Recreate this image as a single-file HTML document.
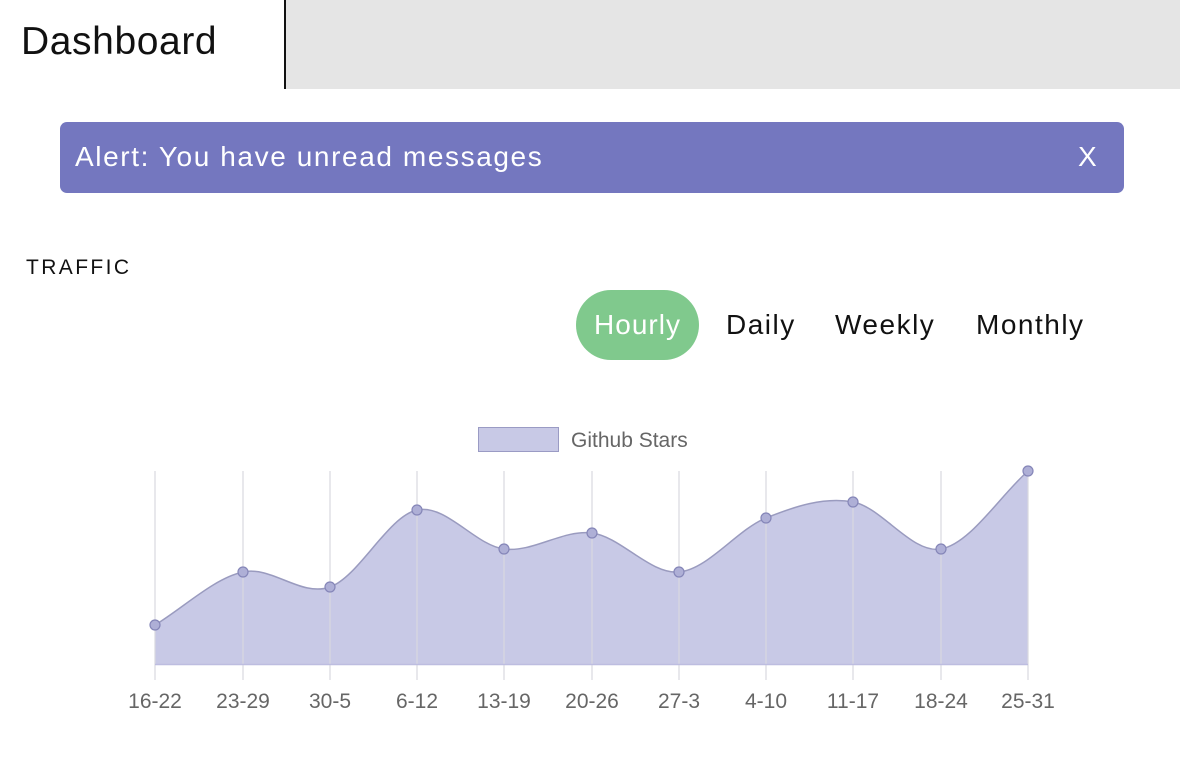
<!DOCTYPE html>
<html><head><style>
body{margin:0;width:1180px;height:784px;background:#fff;font-family:"Liberation Sans",sans-serif;position:relative;overflow:hidden}
.hdr{position:absolute;left:284px;top:0;width:896px;height:89px;background:#e5e5e5;border-left:2px solid #111}
.title{position:absolute;left:21px;top:20px;font-size:39px;color:#111;letter-spacing:0.6px}
.alert{position:absolute;left:60px;top:122px;width:1064px;height:71px;background:#7477bf;border-radius:7px;color:#fff;font-size:28px}
.alert span{position:absolute;left:15px;top:19px;letter-spacing:1.6px}
.alert b{position:absolute;left:1018px;top:19px;font-weight:normal}
.traffic{position:absolute;left:26px;top:256px;font-size:21px;letter-spacing:2.4px;color:#111}
.pill{position:absolute;top:290px;height:70px;line-height:70px;font-size:28px;color:#111;letter-spacing:1.5px}
</style></head><body>
<div class="title">Dashboard</div>
<div class="hdr"></div>
<div class="alert"><span>Alert: You have unread messages</span><b>X</b></div>
<div class="traffic">TRAFFIC</div>
<div class="pill" style="left:576px;width:123px;background:#80c98d;border-radius:35px;color:#fff;text-align:center;letter-spacing:1px">Hourly</div>
<div class="pill" style="left:726px">Daily</div>
<div class="pill" style="left:835px">Weekly</div>
<div class="pill" style="left:976px">Monthly</div>
<svg width="1180" height="784" style="position:absolute;left:0;top:0">
<rect x="478.5" y="427.5" width="80" height="24" fill="#c8c9e6" stroke="#9a9bc4"/>
<text x="571" y="447" font-size="21" fill="#666" font-family="Liberation Sans">Github Stars</text>
<path d="M155 625 C184 607.3 214 578.3 243 572 C272 565.7 301 597.3 330 587 C359 576.7 388 516.3 417 510 C446 503.7 475 545.2 504 549 C533 552.8 563 529.2 592 533 C621 536.8 650 574.5 679 572 C708 569.5 737 529.7 766 518 C795 506.3 824 496.8 853 502 C882 507.2 912 554.2 941 549 C970 543.8 999 497 1028 471 L1028 664 L155 664 Z" fill="#c8c9e6"/>
<g stroke="#d8d8e0" stroke-opacity="0.8" stroke-width="1.5">
<line x1="155" y1="471" x2="155" y2="680"/><line x1="243" y1="471" x2="243" y2="680"/><line x1="330" y1="471" x2="330" y2="680"/><line x1="417" y1="471" x2="417" y2="680"/><line x1="504" y1="471" x2="504" y2="680"/><line x1="592" y1="471" x2="592" y2="680"/><line x1="679" y1="471" x2="679" y2="680"/><line x1="766" y1="471" x2="766" y2="680"/><line x1="853" y1="471" x2="853" y2="680"/><line x1="941" y1="471" x2="941" y2="680"/><line x1="1028" y1="471" x2="1028" y2="680"/>
</g>
<path d="M155 625 C184 607.3 214 578.3 243 572 C272 565.7 301 597.3 330 587 C359 576.7 388 516.3 417 510 C446 503.7 475 545.2 504 549 C533 552.8 563 529.2 592 533 C621 536.8 650 574.5 679 572 C708 569.5 737 529.7 766 518 C795 506.3 824 496.8 853 502 C882 507.2 912 554.2 941 549 C970 543.8 999 497 1028 471" fill="none" stroke="#9a9bbf" stroke-width="1.5"/>
<line x1="155" y1="664.5" x2="1028" y2="664.5" stroke="#bdbde0" stroke-width="1.5"/>
<g fill="#aeafd6" stroke="#8586b8" stroke-width="1.2">
<circle cx="155" cy="625" r="5"/><circle cx="243" cy="572" r="5"/><circle cx="330" cy="587" r="5"/><circle cx="417" cy="510" r="5"/><circle cx="504" cy="549" r="5"/><circle cx="592" cy="533" r="5"/><circle cx="679" cy="572" r="5"/><circle cx="766" cy="518" r="5"/><circle cx="853" cy="502" r="5"/><circle cx="941" cy="549" r="5"/><circle cx="1028" cy="471" r="5"/>
</g>
<g font-size="21" fill="#666" text-anchor="middle" font-family="Liberation Sans">
<text x="155" y="708">16-22</text><text x="243" y="708">23-29</text><text x="330" y="708">30-5</text><text x="417" y="708">6-12</text><text x="504" y="708">13-19</text><text x="592" y="708">20-26</text><text x="679" y="708">27-3</text><text x="766" y="708">4-10</text><text x="853" y="708">11-17</text><text x="941" y="708">18-24</text><text x="1028" y="708">25-31</text>
</g>
</svg>
</body></html>
